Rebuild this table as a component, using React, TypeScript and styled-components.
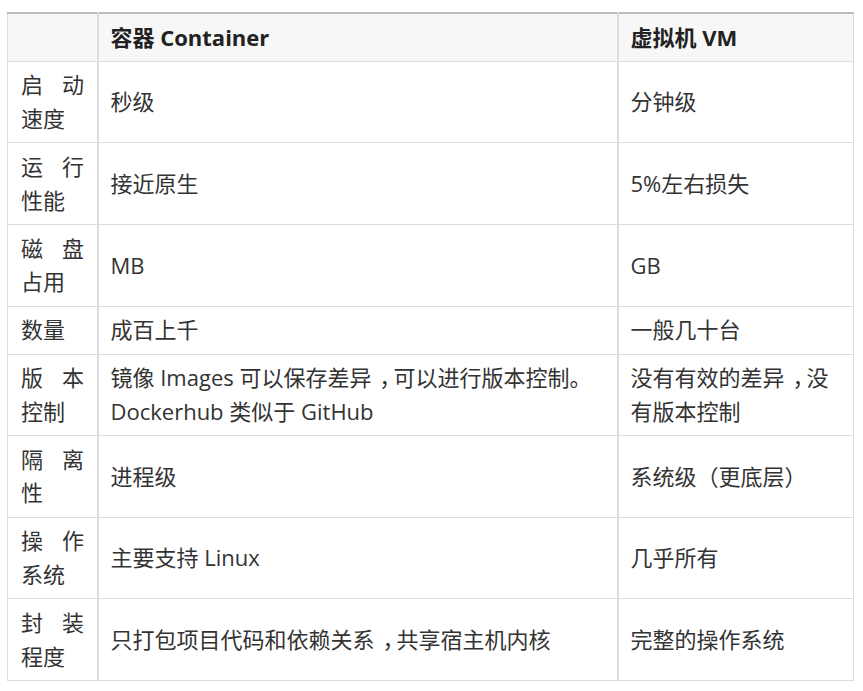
import React from "react";
import styled, { createGlobalStyle } from "styled-components";

const Global = createGlobalStyle`
  html, body { margin: 0; padding: 0; background: #ffffff; }
  body {
    font-family: "Open Sans", "Noto Sans CJK SC", sans-serif;
    color: #333333;
  }
`;

const Page = styled.div`
  padding: 12px 10px 0 7px;
`;

const Table = styled.table`
  width: 846px;
  border-collapse: collapse;
  table-layout: fixed;
  font-size: 22px;
  line-height: 33.7px;
  border-top: 2px solid #bcbcbc;
`;

const Col = styled.col<{ $w: number }>`
  width: ${(p) => p.$w}px;
`;

const HeadCell = styled.th`
  box-sizing: border-box;
  background: #f7f7f7;
  font-weight: 700;
  text-align: left;
  padding: 6.6px 12px;
  border: 1px solid #dddddd;
  border-top: none;
  color: #222222;
  & + & { border-left-width: 2px; }
`;

const LabelCell = styled.td`
  box-sizing: border-box;
  padding: 6.6px 12.5px 6.6px 13px;
  border: 1px solid #dddddd;
  text-align: justify;
  text-justify: inter-character;
  vertical-align: middle;
`;

const Cell = styled.td`
  box-sizing: border-box;
  padding: 6.6px 12px;
  border: 1px solid #dddddd;
  border-left-width: 2px;
  vertical-align: middle;
`;

/* full-width comma drawn centred in its em box, as in the reference */
const Punct = styled.span`
  display: inline-block;
  box-sizing: border-box;
  width: 1em;
  padding-left: 0.36em;
  white-space: nowrap;
`;

const withPunct = (s: string) =>
  s.split(/(，)/).map((part, i) =>
    part === "，" ? (
      <Punct key={i}>，</Punct>
    ) : (
      <React.Fragment key={i}>{part}</React.Fragment>
    )
  );

const rows: [string, string, string][] = [
  ["启动速度", "秒级", "分钟级"],
  ["运行性能", "接近原生", "5%左右损失"],
  ["磁盘占用", "MB", "GB"],
  ["数量", "成百上千", "一般几十台"],
  ["版本控制", "镜像 Images 可以保存差异，可以进行版本控制。Dockerhub 类似于 GitHub", "没有有效的差异，没有版本控制"],
  ["隔离性", "进程级", "系统级（更底层）"],
  ["操作系统", "主要支持 Linux", "几乎所有"],
  ["封装程度", "只打包项目代码和依赖关系，共享宿主机内核", "完整的操作系统"],
];

export default function App() {
  return (
    <>
      <Global />
      <Page>
        <Table>
          <colgroup>
            <Col $w={90} />
            <Col $w={520} />
            <Col $w={236} />
          </colgroup>
          <thead>
            <tr>
              <HeadCell></HeadCell>
              <HeadCell>容器 Container</HeadCell>
              <HeadCell>虚拟机 VM</HeadCell>
            </tr>
          </thead>
          <tbody>
            {rows.map(([a, b, c]) => (
              <tr key={a}>
                <LabelCell>{a}</LabelCell>
                <Cell>{withPunct(b)}</Cell>
                <Cell>{withPunct(c)}</Cell>
              </tr>
            ))}
          </tbody>
        </Table>
      </Page>
    </>
  );
}
